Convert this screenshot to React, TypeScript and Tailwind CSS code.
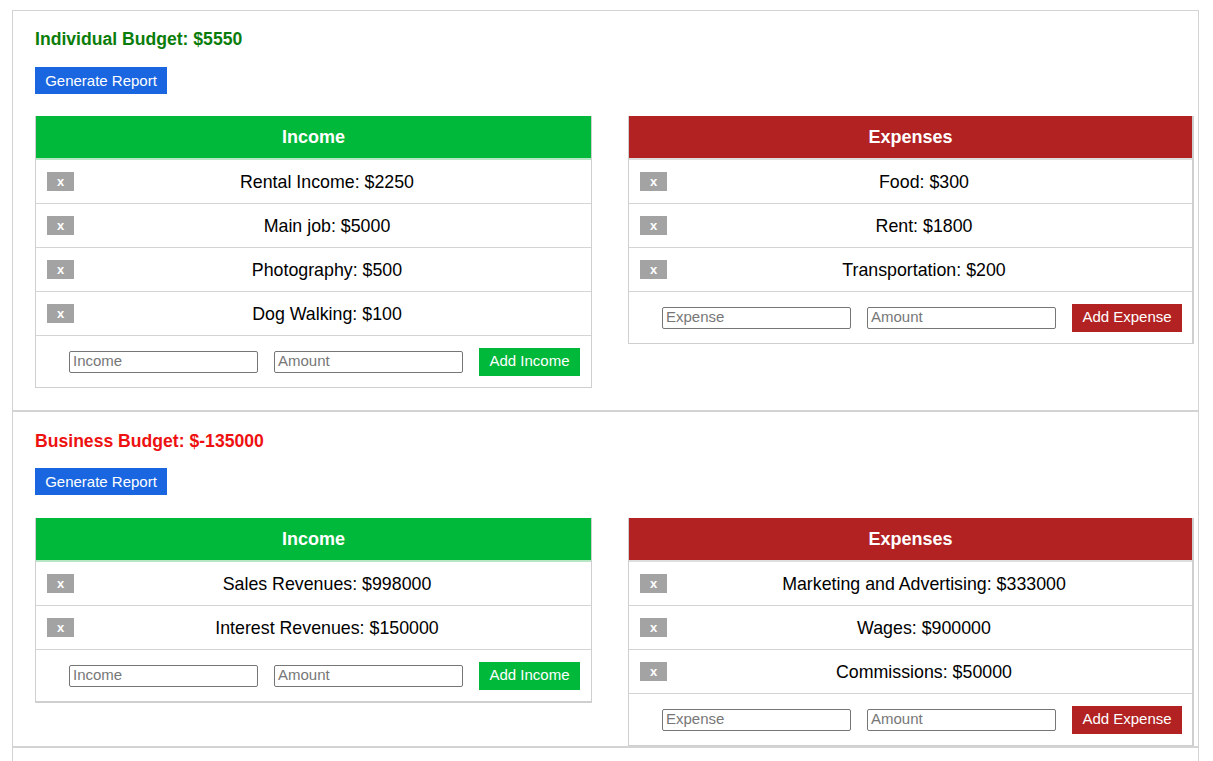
import React from "react";

type Item = { name: string; amount: number };

function Row({ item }: { item: Item }) {
  return (
    <div className="grid grid-cols-[50px_1fr_34px] items-center h-[44px] border-b border-[#d4d4d4] pl-[11px]">
      <button className="w-[27px] h-[19px] bg-[#a3a3a3] text-white font-bold text-[13px] leading-[19px] flex items-center justify-center">
        x
      </button>
      <div className="text-center text-[17.8px] text-black pt-[1px]">
        {item.name}: ${item.amount}
      </div>
      <div />
    </div>
  );
}

function Table({
  kind,
  items,
  width,
  btnWidth,
  last,
}: {
  kind: "income" | "expense";
  items: Item[];
  width: string;
  btnWidth: string;
  last?: boolean;
}) {
  const isIncome = kind === "income";
  return (
    <div
      className={
        (isIncome ? "" : "border-r-2 ") +
        "border-l border-r border-b border-[#cfcfcf] self-start " +
        (last ? "border-b-2" : "")
      }
      style={{ width }}
    >
      <div
        className={
          "h-[44px] flex items-center justify-center text-white font-bold text-[18px] border-b-2 " +
          (isIncome ? "bg-[#00b83a] border-[#b6e6c4]" : "bg-[#b22222] border-[#dedede]")
        }
      >
        {isIncome ? "Income" : "Expenses"}
      </div>
      {items.map((it) => (
        <Row key={it.name} item={it} />
      ))}
      <div className="h-[51px] flex items-center pl-[33px] gap-[16px]">
        <input
          placeholder={isIncome ? "Income" : "Expense"}
          className="w-[189px] h-[22px] border border-[#767676] rounded-[2px] px-[3px] text-[15px] placeholder:text-[#777] outline-none"
        />
        <input
          placeholder="Amount"
          className="w-[189px] h-[22px] border border-[#767676] rounded-[2px] px-[3px] text-[15px] placeholder:text-[#777] outline-none"
        />
        <button
          className={
            "h-[28px] text-white text-[15px] " +
            (isIncome ? "bg-[#00b83a]" : "bg-[#b22222]")
          }
          style={{ width: btnWidth }}
        >
          {isIncome ? "Add Income" : "Add Expense"}
        </button>
      </div>
    </div>
  );
}

function Section({
  title,
  color,
  income,
  expenses,
  pt,
  pb,
  gapTitle,
  gapBtn,
  lastIncome,
}: {
  title: string;
  color: string;
  income: Item[];
  expenses: Item[];
  pt: string;
  pb: string;
  gapTitle: string;
  gapBtn: string;
  lastIncome?: boolean;
}) {
  return (
    <div className="border-b-2 border-[#d3d3d3] pl-[22px]" style={{ paddingTop: pt, paddingBottom: pb }}>
      <div className="font-bold text-[17.6px] leading-[20px]" style={{ color }}>
        {title}
      </div>
      <button
        className="bg-[#1a66e0] text-white text-[15px] h-[27px] w-[132px] pt-[1px]"
        style={{ marginTop: gapTitle }}
      >
        Generate Report
      </button>
      <div className="flex gap-[36px]" style={{ marginTop: gapBtn }}>
        <Table kind="income" items={income} width="557px" btnWidth="101px" last={lastIncome} />
        <Table kind="expense" items={expenses} width="566px" btnWidth="110px" />
      </div>
    </div>
  );
}

export default function App() {
  return (
    <div
      className="bg-white min-h-screen pt-[10px] pl-[12px]"
      style={{ fontFamily: '"Liberation Sans", Arial, sans-serif' }}
    >
      <div className="w-[1187px] min-h-[760px] border border-[#d3d3d3]">
        <Section
          title="Individual Budget: $5550"
          color="#0b7d0b"
          pt="18px"
          pb="22px"
          gapTitle="18px"
          gapBtn="22px"
          income={[
            { name: "Rental Income", amount: 2250 },
            { name: "Main job", amount: 5000 },
            { name: "Photography", amount: 500 },
            { name: "Dog Walking", amount: 100 },
          ]}
          expenses={[
            { name: "Food", amount: 300 },
            { name: "Rent", amount: 1800 },
            { name: "Transportation", amount: 200 },
          ]}
        />
        <Section
          title="Business Budget: $-135000"
          color="#ee1111"
          pt="19px"
          pb="0px"
          gapTitle="17px"
          gapBtn="23px"
          lastIncome
          income={[
            { name: "Sales Revenues", amount: 998000 },
            { name: "Interest Revenues", amount: 150000 },
          ]}
          expenses={[
            { name: "Marketing and Advertising", amount: 333000 },
            { name: "Wages", amount: 900000 },
            { name: "Commissions", amount: 50000 },
          ]}
        />
      </div>
    </div>
  );
}
